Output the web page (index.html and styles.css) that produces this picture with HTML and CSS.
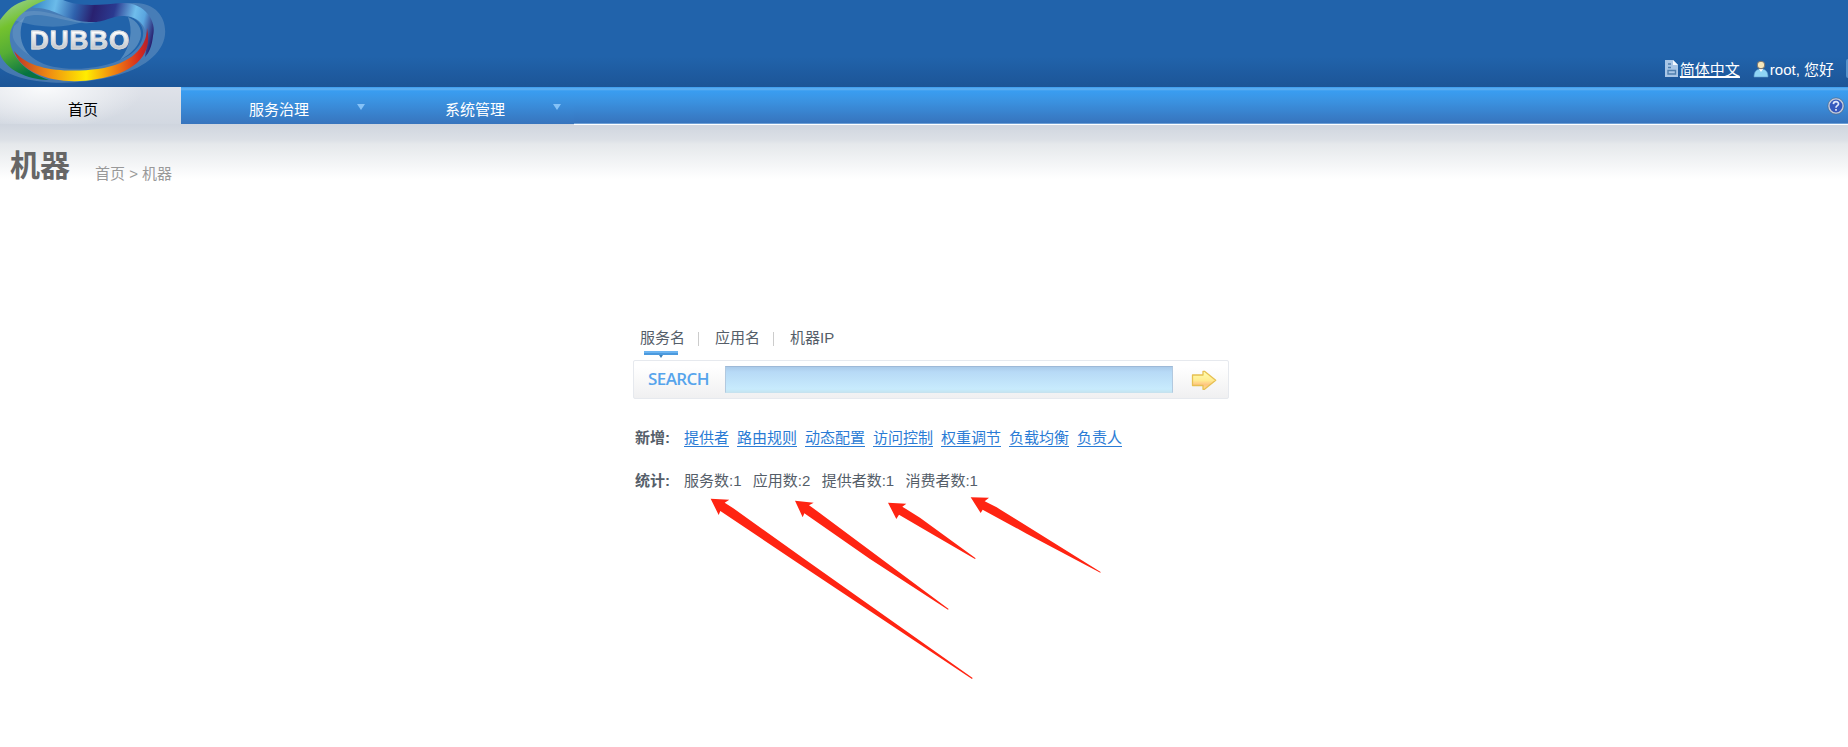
FILE: index.html
```html
<!DOCTYPE html>
<html lang="zh-CN">
<head>
<meta charset="utf-8">
<title>Dubbo Admin</title>
<link rel="stylesheet" href="styles.css">
</head>
<body>
<header class="header">
  <div class="logo">
    <svg class="logo-ring" width="170" height="87" viewBox="0 0 170 87">
      <defs>
        <linearGradient id="green" x1="0" y1="0" x2="0.3" y2="1"><stop offset="0" stop-color="#9fd3a8"/><stop offset=".35" stop-color="#74c22e"/><stop offset=".65" stop-color="#55ad35"/><stop offset="1" stop-color="#067342"/></linearGradient>
        <linearGradient id="fire" x1="14" y1="0" x2="150" y2="0" gradientUnits="userSpaceOnUse"><stop offset="0" stop-color="#bd3426"/><stop offset=".25" stop-color="#ee8a12"/><stop offset=".53" stop-color="#ffed00"/><stop offset=".75" stop-color="#ee7d12"/><stop offset=".92" stop-color="#d82b1d"/><stop offset="1" stop-color="#a91f32"/></linearGradient>
        <linearGradient id="sky" x1="28" y1="10" x2="152" y2="40" gradientUnits="userSpaceOnUse"><stop offset="0" stop-color="#2d7fc0"/><stop offset=".2" stop-color="#6bbbea"/><stop offset=".36" stop-color="#2f62ad"/><stop offset=".5" stop-color="#292170"/><stop offset=".66" stop-color="#2b3a90"/><stop offset=".82" stop-color="#6fbdec"/><stop offset=".9" stop-color="#5aa5df"/><stop offset="1" stop-color="#292170"/></linearGradient>
      </defs>
      <path d="M-4 28C12 5 42 0 58 5C79 13 112 3 134 3C161 2 171 27 162 45C153 63 129 75 95 80C45 88 6 77-4 64Z" fill="#86a9cb" opacity=".38"/>
      <path d="M25 17C42 11 57 20 83 23C104 25 112 10 129 16C151 24 146 48 124 58C100 71 56 73 36 60C18 49 18 28 25 17Z" fill="#2163aa"/>
      <path d="M128 17C147 25 146 46 120 60C131 46 133 30 128 17Z" fill="#82add1" opacity=".5"/>
      <path d="M25 17C18 28 18 49 36 60C22 50 8 42 14 26Z" fill="#82add1" opacity=".3"/>
      <path d="M14 20C44 30 68 27 82 22C62 17 43 8 24 12Z" fill="#82add1" opacity=".32"/>
      <path d="M38 0H63C81 8 105 4 123 3C146 3 157 22 153 36C152 46 149 53 145 57C149 37 147 22 131 17C110 12 108 26 80 21C58 16 52 7 32 8Z" fill="url(#sky)"/>
      <path d="M27 0H46C23 8 8 24 10 41C12 58 26 72 49 80C22 79-2 66-2 43V23C6 11 13 4 27 0Z" fill="url(#green)"/>
      <path d="M14 51C32 73 73 72 98 69C132 64 147 47 147 28C154 58 130 74 97 79C61 86 22 76 14 51Z" fill="url(#fire)"/>
    </svg>
    <span class="logo-text">DUBBO</span>
  </div>
  <div class="user-bar">
    <svg width="16" height="20" viewBox="0 0 16 20"><path d="M1 1H9L14 6V18H1Z" fill="#a9c6e6"/><path d="M9 1V6H14Z" fill="#f4f9ff"/><path d="M4 5H7M4 8.5H7M4 11.5H11.500V15H4Z" fill="none" stroke="#4f7fae" stroke-width="1.4"/></svg>
    <a class="lang" href="#">简体中文</a>
    <svg class="user-icon" width="16" height="20" viewBox="0 0 16 20"><path d="M1 18C1 12 4 10 8 10S15 12 15 18Z" fill="#8fd5f5" stroke="#5fa0cf" stroke-width=".6"/><path d="M6 10 8 13 10 10Z" fill="#fff"/><circle cx="8" cy="6" r="3.8" fill="#f7e8bb" stroke="#77716d" stroke-width="1"/></svg>
    <span class="hello">root, 您好</span>
    <span class="exit"></span>
  </div>
</header>
<nav class="nav">
  <a class="nav-item active" href="#">首页</a>
  <a class="nav-item services" href="#">服务治理<i class="caret"></i></a>
  <a class="nav-item system" href="#">系统管理<i class="caret"></i></a>
  <div class="nav-rest">
    <svg width="18" height="18" viewBox="0 0 18 18"><circle cx="9" cy="9" r="7.2" fill="#3558bd" stroke="#c3cbdc" stroke-width="1.6"/><circle cx="9" cy="9" r="8.2" fill="none" stroke="#56667f" stroke-width=".6"/><path d="M6.4 7.1C6.5 3.8 11.8 4 11.5 7.1C11.3 8.7 9 8.800 9 10.700M9 12V13.800" fill="none" stroke="#dfe6fa" stroke-width="1.700"/></svg>
  </div>
</nav>
<section class="heading">
  <h1>机器</h1>
  <div class="crumbs">首页 &gt; 机器</div>
</section>
<main class="search">
  <div class="tabs">
    <span class="tab selected">服务名</span><i class="sep"></i><span class="tab">应用名</span><i class="sep"></i><span class="tab">机器IP</span>
  </div>
  <form class="search-box">
    <label class="search-label" for="q">SEARCH</label>
    <input id="q" class="query" type="text">
    <svg class="go" width="27" height="21" viewBox="0 0 27 21">
      <defs><linearGradient id="gold" x1="0" y1="0" x2="0" y2="1"><stop offset="0" stop-color="#ffffb0"/><stop offset=".5" stop-color="#ffec91"/><stop offset=".75" stop-color="#ffc482"/><stop offset="1" stop-color="#ffe28a"/></linearGradient></defs>
      <path d="M1.500 5H12V1.300H13.500L24.700 10.300 13.500 19.300H12V15.500H1.500Z" fill="url(#gold)" stroke="#e6c052" stroke-width="1.300" stroke-linejoin="round"/>
    </svg>
  </form>
  <div class="row links"><b>新增:</b><a href="#">提供者</a><a href="#">路由规则</a><a href="#">动态配置</a><a href="#">访问控制</a><a href="#">权重调节</a><a href="#">负载均衡</a><a href="#">负责人</a></div>
  <div class="row stats"><b>统计:</b><span>服务数:1</span><span>应用数:2</span><span>提供者数:1</span><span>消费者数:1</span></div>
</main>
<svg class="arrows" width="420" height="210" viewBox="0 0 1260 630">
  <path d="M62 56 118 59 104 68 130 85 340 235 848 594 846 597 320 247 91 93 86 105Z"/>
  <path d="M315 62 371 68 357 76 380 92 776 387 774 389 540 237 343 100 338 112Z"/>
  <path d="M594 68 649 71 637 80 690 113 857 235 855 237 740 170 627 104 619 117Z"/>
  <path d="M842 52 897 53 884 64 920 82 1232 276 1231 278 1010 161 878 89 872 99Z"/>
</svg>
</body>
</html>
```
FILE: styles.css
```css
* { box-sizing: border-box; }
body {
  margin: 0;
  height: 747px;
  overflow: hidden;
  background: #fff;
  color: #555e69;
  font: 15px/20px "Liberation Sans", "Noto Sans CJK SC", sans-serif;
}
.header {
  display: flex;
  justify-content: space-between;
  height: 87px;
  background: linear-gradient(#2163ab 0, #2163ab 65%, #1c5597 100%);
}
.logo { position: relative; }
.logo-ring { display: block; }
.logo-text {
  position: absolute;
  left: 30px;
  top: 26px;
  font: bold 26px/28px "Liberation Sans", sans-serif;
  letter-spacing: 1px;
  background: linear-gradient(#fff 20%, #bfc3c8 85%);
  background-clip: text;
  -webkit-background-clip: text;
  color: transparent;
  -webkit-text-stroke: .8px #d5d9de;
}
.user-bar {
  display: flex;
  align-items: flex-start;
  padding-top: 59px;
  color: #fff;
  white-space: nowrap;
}
.user-bar svg { display: block; }
.lang { color: #fff; border-bottom: 1px solid #fff; height: 19px; line-height: 22px; }
.user-icon { margin-left: 13px; }
.hello { margin-left: 1px; line-height: 22px; }
.exit { width: 2px; height: 19px; margin-left: 12px; background: #5591cb; border-radius: 2px 0 0 2px; }
.nav { display: flex; height: 37px; }
.nav-item {
  display: flex;
  align-items: center;
  height: 37px;
  padding-top: 9px;
  color: #fff;
  text-decoration: none;
  background: linear-gradient(#389bef 0, #65b1f0 2px, #399df1 4px, #3b95e4 12px, #3774bd 100%);
}
.active {
  width: 181px;
  padding-left: 68px;
  color: #000;
  background: radial-gradient(100px 42px at 44px 0, #fafbfc 0, rgba(240,242,245,.8) 45%, rgba(217,222,229,0) 100%), linear-gradient(#dfe2e9, #d2d8e1);
}
.services { width: 197px; padding-left: 68px; }
.system { width: 196px; padding-left: 67px; }
.caret {
  margin: -6px 0 0 48px;
  border: solid transparent;
  border-width: 6px 4px 0;
  border-top-color: #85c2f7;
}
.nav-rest {
  display: flex;
  flex: 1;
  justify-content: flex-end;
  padding: 10px 3px 0;
  border-bottom: 1px solid #6fa0d6;
  background: linear-gradient(#389bef 0, #65b1f0 2px, #399df1 4px, #3b95e4 12px, #3774bd 100%);
  box-shadow: 0 1px #fff;
}
.heading {
  display: flex;
  height: 58px;
  padding-left: 10px;
  background: linear-gradient(#cfd5de 0, #dce0e6 16px, #e5e8eb 20px, #fff 55px);
}
.heading h1 {
  margin: 22px 0 0;
  color: #666;
  font: bold 30px/40px "Liberation Sans", "Noto Sans CJK SC", sans-serif;
}
.crumbs { margin: 40px 0 0 25px; color: #999; }
.search { width: 596px; margin: 146px 0 0 633px; }
.tabs { display: flex; height: 32px; padding-left: 7px; }
.tab { height: 27px; }
.selected { position: relative; }
.selected::before {
  content: "";
  position: absolute;
  left: 4px;
  top: 23px;
  width: 34px;
  height: 4px;
  background: linear-gradient(#6bb3f0 0 50%, #4b9ade 50%);
}
.selected::after {
  content: "";
  position: absolute;
  left: 19px;
  top: 27px;
  border: solid transparent;
  border-width: 3px 2px 0;
  border-top-color: #3c80b9;
}
.sep { width: 1px; height: 14px; margin: 4px 16px 0 13px; background: #ccc; }
.search-box {
  display: flex;
  height: 39px;
  border: 1px solid #e6e9ee;
  border-radius: 2px;
  background: linear-gradient(#fff 15%, #f0f0f1);
}
.search-label {
  width: 91px;
  padding: 7px 0 0 14px;
  color: #56a4ec;
  font: 600 17px/22px "Open Sans", sans-serif;
  letter-spacing: -.6px;
}
.query {
  width: 448px;
  height: 27px;
  margin-top: 5px;
  padding: 0 4px;
  border: 1px solid #b2c9df;
  border-top-color: #9db9d7;
  border-bottom-color: #c6e2ef;
  border-radius: 0;
  background: linear-gradient(#abcbea 0, #b7daf6 5px, #c8ebfd 22px, #c4e5f1);
}
.go { margin: 9px 0 0 18px; }
.row { display: flex; white-space: nowrap; }
.row b { width: 49px; }
.links { margin: 28px 0 0 2px; gap: 8px; }
.links b { margin-right: -8px; }
.row { line-height: 22px; }
.links a { height: 20px; color: #2a7bd5; text-decoration: none; border-bottom: 1px solid #2a7bd5; }
.stats { margin: 21px 0 0 2px; gap: 11.3px; }
.stats b { margin-right: -11.3px; }
.arrows { position: absolute; left: 690px; top: 480px; fill: #ff2412; pointer-events: none; }
```
